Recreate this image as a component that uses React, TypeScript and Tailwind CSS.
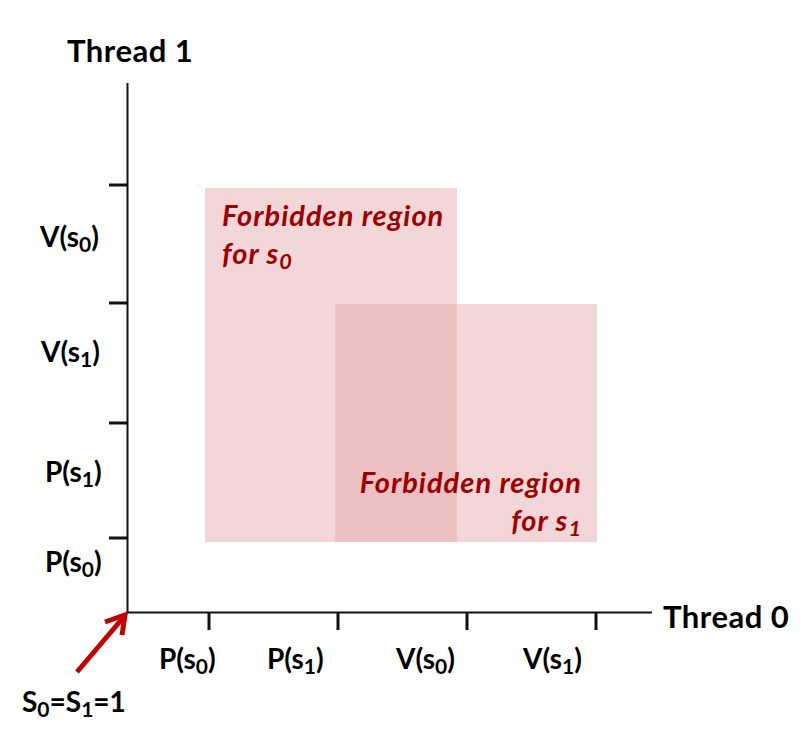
const sans = "font-['Lato','Liberation_Sans',sans-serif]";

function Sub({ children }: { children: React.ReactNode }) {
  return <sub>{children}</sub>;
}

export default function App() {
  return (
    <div className={`relative w-[801px] h-[729px] bg-white text-black ${sans}`}>
      {/* the drawing: regions, axes, ticks, arrow */}
      <svg className="absolute inset-0" width="801" height="729" viewBox="0 0 801 729">
        <rect x="205" y="188" width="252" height="354" fill="#f3d6d8" />
        <rect x="335" y="304" width="262" height="238" fill="#f3d6d8" />
        <rect x="335" y="304" width="122" height="238" fill="#edc0c1" />

        <line x1="127.5" y1="83" x2="127.5" y2="613" stroke="#111" strokeWidth="2" />
        <line x1="126.5" y1="612.5" x2="652" y2="612.5" stroke="#111" strokeWidth="2" />

        {[185, 303, 423, 538].map((y) => (
          <line key={y} x1="109" y1={y} x2="127" y2={y} stroke="#111" strokeWidth="3" />
        ))}
        {[209, 338, 467, 596].map((x) => (
          <line key={x} x1={x} y1="612" x2={x} y2="630" stroke="#111" strokeWidth="3" />
        ))}

        <line x1="77" y1="672" x2="122" y2="619" stroke="#c00000" strokeWidth="5" />
        <polyline
          points="105,622 125,615 122,635"
          fill="none"
          stroke="#c00000"
          strokeWidth="5"
          strokeLinejoin="miter"
        />
      </svg>

      {/* axis titles */}
      <div className="absolute left-[67px] top-[35px] text-[31px] font-bold leading-none tracking-[0.5px]">
        Thread 1
      </div>
      <div className="absolute left-[663px] top-[601px] text-[31px] font-bold leading-none tracking-[0.5px]">
        Thread 0
      </div>

      {/* thread 1 labels */}
      <div className="absolute left-[40px] top-[222px] text-[28px] font-bold leading-none">
        V(s<Sub>0</Sub>)
      </div>
      <div className="absolute left-[41px] top-[337px] text-[28px] font-bold leading-none">
        V(s<Sub>1</Sub>)
      </div>
      <div className="absolute left-[45px] top-[457px] text-[28px] font-bold leading-none">
        P(s<Sub>1</Sub>)
      </div>
      <div className="absolute left-[45px] top-[547px] text-[28px] font-bold leading-none">
        P(s<Sub>0</Sub>)
      </div>

      {/* thread 0 labels */}
      <div className="absolute left-[159px] top-[644px] text-[28px] font-bold leading-none">
        P(s<Sub>0</Sub>)
      </div>
      <div className="absolute left-[267px] top-[644px] text-[28px] font-bold leading-none">
        P(s<Sub>1</Sub>)
      </div>
      <div className="absolute left-[396px] top-[644px] text-[28px] font-bold leading-none">
        V(s<Sub>0</Sub>)
      </div>
      <div className="absolute left-[523px] top-[644px] text-[28px] font-bold leading-none">
        V(s<Sub>1</Sub>)
      </div>

      <div className="absolute left-[22px] top-[687px] text-[28px] font-bold leading-none">
        S<Sub>0</Sub>=S<Sub>1</Sub>=1
      </div>

      {/* region captions */}
      <div className="absolute left-[222px] top-[196px] text-[29px] font-bold italic leading-[38px] tracking-[1px] text-[#9c0000]">
        <div>Forbidden region</div>
        <div>
          for s<Sub>0</Sub>
        </div>
      </div>
      <div className="absolute right-[219px] top-[463px] text-right text-[29px] font-bold italic leading-[38px] tracking-[1px] text-[#9c0000]">
        <div>Forbidden region</div>
        <div>
          for s<Sub>1</Sub>
        </div>
      </div>
    </div>
  );
}
